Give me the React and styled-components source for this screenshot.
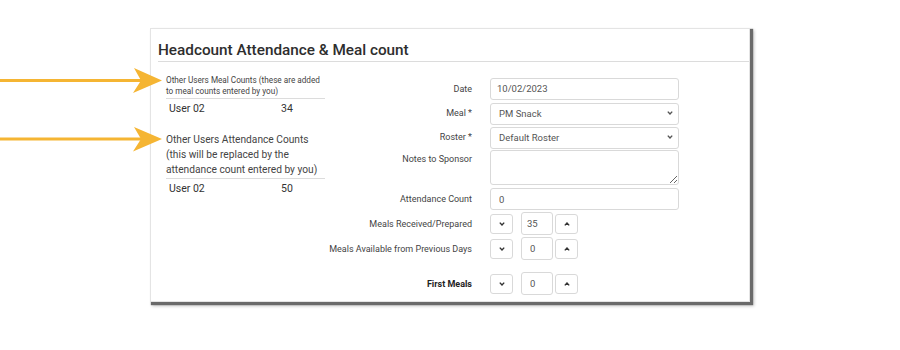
import React from "react";
import styled, { createGlobalStyle } from "styled-components";

const Global = createGlobalStyle`
  html, body { margin: 0; padding: 0; background: #fff; }
  body { font-family: Roboto, "Liberation Sans", Arial, sans-serif; color: #333; }
  * { box-sizing: border-box; }
`;

const Page = styled.div`
  position: relative;
  width: 900px;
  height: 350px;
  padding: 28px 0 0 150px;
  overflow: hidden;
`;

const Annotations = styled.svg`
  position: absolute;
  left: 0;
  top: 0;
  pointer-events: none;
`;

const Panel = styled.section`
  width: 600px;
  height: 274px;
  background: #fff;
  border: 1px solid #e4e4e4;
  box-shadow: 2px 2px 1px 1px #6a6a6a, 3px 3px 3px 1px rgba(0,0,0,0.25);
`;

const Header = styled.header`
  margin-left: 7px;
  padding: 11px 0 1px;
  border-bottom: 1px solid #dcdcdc;
`;

const Title = styled.h2`
  margin: 0;
  font-size: 15.3px;
  line-height: 20px;
  font-weight: 500;
  color: #2e2e2e;
`;

const Body = styled.div`
  display: flex;
  padding: 13px 0 0 15px;
`;

const LeftCol = styled.div`
  width: 159px;
  display: flex;
  flex-direction: column;
`;

const Note = styled.div`
  font-size: ${(p) => p.$size}px;
  line-height: ${(p) => p.$lh}px;
  color: #444;
  padding-bottom: 1px;
  border-bottom: 1px solid #dcdcdc;
  margin-top: ${(p) => p.$mt || 0}px;
`;

const UserRow = styled.div`
  display: flex;
  align-items: center;
  height: 18px;
  padding-left: 3px;
  font-size: 10.5px;
  color: #333;
`;

const UserName = styled.span`
  width: 112px;
`;

const Form = styled.div`
  margin-top: 2px;
  display: flex;
  flex-direction: column;
  gap: 2px;
`;

const Row = styled.div`
  display: grid;
  grid-template-columns: 147px 189px;
  column-gap: 18px;
  align-items: ${(p) => (p.$top ? "start" : "center")};
  height: ${(p) => p.$h}px;
  margin-top: ${(p) => p.$mt || 0}px;
`;

const Label = styled.label`
  text-align: right;
  font-size: 9px;
  color: ${(p) => (p.$bold ? "#222" : "#444")};
  font-weight: ${(p) => (p.$bold ? 700 : 400)};
  padding-top: ${(p) => (p.$top ? 4 : 0)}px;
  white-space: nowrap;
`;

const fieldBase = `
  width: 189px;
  border: 1px solid #d9d9d9;
  border-radius: 3px;
  background: #fff;
  font-family: Roboto, "Liberation Sans", Arial, sans-serif;
  font-size: 9.5px;
  color: #555;
  outline: none;
`;

const TextInput = styled.input`
  ${fieldBase}
  height: 22px;
  padding: 0 ${(p) => p.$pad || 6}px;
`;

const SelectWrap = styled.div`
  position: relative;
  width: 189px;
  height: 22px;
`;

const Select = styled.select`
  ${fieldBase}
  height: 22px;
  padding: 0 0 0 8px;
  appearance: none;
  -webkit-appearance: none;
`;

const Caret = styled.svg`
  position: absolute;
  right: 6px;
  top: 9px;
  pointer-events: none;
`;

const TextArea = styled.textarea`
  ${fieldBase}
  height: 35px;
  padding: 4px 6px;
  resize: vertical;
  display: block;
`;

const Spinner = styled.div`
  display: flex;
  align-items: center;
`;

const StepButton = styled.button`
  width: 23px;
  height: 20px;
  padding: 0;
  border: 1px solid #d9d9d9;
  border-radius: 3px;
  background: #fff;
  display: flex;
  align-items: center;
  justify-content: center;
  margin-right: ${(p) => p.$mr || 0}px;
`;

const StepValue = styled.input`
  ${fieldBase}
  width: 32px;
  height: 23px;
  padding: 0 0 0 ${(p) => p.$pl}px;
  margin-right: 2px;
`;

const Chevron = ({ up }) => (
  <svg width="6" height="4" viewBox="0 0 6 4">
    <path
      d={up ? "M0.8 3.4 L3 1 L5.2 3.4" : "M0.8 0.6 L3 3 L5.2 0.6"}
      fill="none"
      stroke="#333"
      strokeWidth="1.4"
    />
  </svg>
);

const Stepper = ({ value, pl }) => (
  <Spinner>
    <StepButton type="button" $mr={8}>
      <Chevron />
    </StepButton>
    <StepValue readOnly value={value} $pl={pl} />
    <StepButton type="button">
      <Chevron up />
    </StepButton>
  </Spinner>
);

const SelectField = ({ value }) => (
  <SelectWrap>
    <Select value={value} onChange={() => {}}>
      <option>{value}</option>
    </Select>
    <Caret width="6" height="4" viewBox="0 0 6 4">
      <path d="M0.8 0.6 L3 3 L5.2 0.6" fill="none" stroke="#555" strokeWidth="1.4" />
    </Caret>
  </SelectWrap>
);

const ARROW = "#f5b533";

export default function App() {
  return (
    <Page>
      <Global />
      <Panel>
        <Header>
          <Title>Headcount Attendance &amp; Meal count</Title>
        </Header>
        <Body>
          <LeftCol>
            <Note $size={8.2} $lh={11}>
              Other Users Meal Counts (these are added to meal counts entered by you)
            </Note>
            <UserRow>
              <UserName>User 02</UserName>
              <span>34</span>
            </UserRow>
            <Note $size={10.2} $lh={15} $mt={15}>
              Other Users Attendance Counts (this will be replaced by the attendance count entered by you)
            </Note>
            <UserRow>
              <UserName>User 02</UserName>
              <span>50</span>
            </UserRow>
          </LeftCol>
          <Form>
            <Row $h={23}>
              <Label>Date</Label>
              <TextInput readOnly value="10/02/2023" />
            </Row>
            <Row $h={22}>
              <Label>Meal *</Label>
              <SelectField value="PM Snack" />
            </Row>
            <Row $h={22}>
              <Label>Roster *</Label>
              <SelectField value="Default Roster" />
            </Row>
            <Row $h={36} $top>
              <Label $top>Notes to Sponsor</Label>
              <TextArea />
            </Row>
            <Row $h={22}>
              <Label>Attendance Count</Label>
              <TextInput readOnly value="0" $pad={8} />
            </Row>
            <Row $h={23}>
              <Label>Meals Received/Prepared</Label>
              <Stepper value="35" pl={5} />
            </Row>
            <Row $h={23}>
              <Label>Meals Available from Previous Days</Label>
              <Stepper value="0" pl={8} />
            </Row>
            <Row $h={23} $mt={10}>
              <Label $bold>First Meals</Label>
              <Stepper value="0" pl={8} />
            </Row>
          </Form>
        </Body>
      </Panel>
      <Annotations width="900" height="350" viewBox="0 0 900 350">
        <rect x="0" y="79" width="142" height="3" fill={ARROW} />
        <polygon points="134,68 162,80.5 133,93 141,80.5" fill={ARROW} />
        <rect x="0" y="137.5" width="142" height="3" fill={ARROW} />
        <polygon points="134,127 162,139 133,151.5 141,139" fill={ARROW} />
      </Annotations>
    </Page>
  );
}
